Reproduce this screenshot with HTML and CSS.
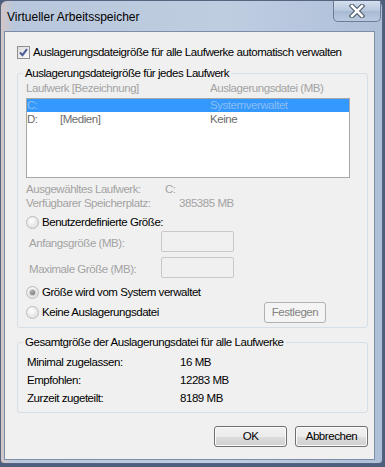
FILE: index.html
```html
<!DOCTYPE html>
<html lang="de">
<head>
  <meta charset="UTF-8" />
  <meta name="viewport" content="width=device-width, initial-scale=1.0" />
  <title>Virtueller Arbeitsspeicher</title>
  <link rel="stylesheet" href="styles.css">
</head>
<body>
  <div class="window">
    <div class="titlebar">
      <span class="title">Virtueller Arbeitsspeicher</span>
      <span class="close">
        <svg width="16" height="14" viewBox="0 0 16 14">
          <path d="M3 2 L13 12 M13 2 L3 12" stroke="#4a5668" stroke-width="4.6" stroke-linecap="square" fill="none"/>
          <path d="M3 2 L13 12 M13 2 L3 12" stroke="#ffffff" stroke-width="2.6" stroke-linecap="square" fill="none"/>
        </svg>
      </span>
    </div>

    <div class="panel">
      <div class="check-row">
        <span class="checkbox">
          <svg width="11" height="11" viewBox="0 0 11 11">
            <path d="M2 5.5 L4.5 8.2 L9 2.2" stroke="#4b5c96" stroke-width="2" fill="none"/>
          </svg>
        </span>
        Auslagerungsdateigröße für alle Laufwerke automatisch verwalten
      </div>

      <fieldset class="group group-drives">
        <legend>Auslagerungsdateigröße für jedes Laufwerk</legend>
        <div class="list-head">
          <span class="col-drive">Laufwerk [Bezeichnung]</span>
          <span>Auslagerungsdatei (MB)</span>
        </div>
        <div class="listbox">
          <div class="list-row selected">
            <span class="col-drive">C:</span>
            <span>Systemverwaltet</span>
          </div>
          <div class="list-row">
            <span class="col-drive"><span class="letter">D:</span>[Medien]</span>
            <span>Keine</span>
          </div>
        </div>
        <div class="info info-first"><span class="info-label drive">Ausgewähltes Laufwerk:</span>C:</div>
        <div class="info"><span class="info-label space">Verfügbarer Speicherplatz:</span>385385 MB</div>

        <div class="radio-row custom"><span class="radio"></span>Benutzerdefinierte Größe:</div>
        <div class="size-row initial">
          <span class="size-label">Anfangsgröße (MB):</span>
          <span class="textbox"></span>
        </div>
        <div class="size-row maximum">
          <span class="size-label">Maximale Größe (MB):</span>
          <span class="textbox"></span>
        </div>
        <div class="radio-row system"><span class="radio checked"></span>Größe wird vom System verwaltet</div>
        <div class="radio-row none">
          <span class="radio"></span>Keine Auslagerungsdatei
          <span class="btn btn-set">Festlegen</span>
        </div>
      </fieldset>

      <fieldset class="group group-total">
        <legend>Gesamtgröße der Auslagerungsdatei für alle Laufwerke</legend>
        <div class="total-row"><span class="total-label">Minimal zugelassen:</span>16 MB</div>
        <div class="total-row"><span class="total-label">Empfohlen:</span>12283 MB</div>
        <div class="total-row"><span class="total-label">Zurzeit zugeteilt:</span>8189 MB</div>
      </fieldset>

      <div class="actions">
        <span class="btn">OK</span>
        <span class="btn">Abbrechen</span>
      </div>
    </div>
  </div>
</body>
</html>
```

FILE: styles.css
```css
* {
  box-sizing: border-box;
  margin: 0;
  padding: 0;
}
body {
  background: #4e5f7e;
  font-family: "Liberation Sans", Arial, sans-serif;
  font-size: 12px;
  line-height: 15px;
  color: #000;
  width: 385px;
  height: 467px;
  overflow: hidden;
}
.window {
  width: 383px;
  height: 464px;
  border: 1px solid #55647f;
  border-radius: 7px 7px 4px 4px;
  background: linear-gradient(90deg, #d3c6c6 0, #b9c7dc 12px, #bfcde1 60%, #aebfd8 100%);
  display: flex;
  flex-direction: column;
}
.titlebar {
  height: 30px;
  display: flex;
  justify-content: space-between;
  align-items: flex-start;
}
.title {
  margin: 9px 0 0 6px;
  color: #000;
}
.close {
  width: 48px;
  height: 21px;
  margin-right: 1px;
  border: 1px solid #6d7c96;
  border-top: none;
  border-radius: 0 0 5px 5px;
  background: linear-gradient(#d4dfee, #b6c6dc 50%, #a8bad3 51%, #b9c9df);
  display: flex;
  justify-content: center;
  align-items: center;
}
.panel {
  margin: 0 7px 0 3px;
  height: 429px;
  border: 1px solid #7d8da8;
  background: #f0f0f0;
  padding: 13px 6px 0 12px;
  display: flex;
  flex-direction: column;
  font-size: 11.5px;
  letter-spacing: -0.45px;
  white-space: nowrap;
}
.check-row {
  display: flex;
  align-items: center;
  height: 15px;
}
.checkbox {
  width: 13px;
  height: 13px;
  margin-right: 3px;
  border: 1px solid #8e8f8f;
  background: linear-gradient(135deg, #dcdcdc, #fbfbfb);
  display: flex;
  justify-content: center;
  align-items: center;
}
.group {
  width: 351px;
  border: 1px solid #d5dfe5;
  border-radius: 3px;
  padding: 0 8px 4px 8px;
}
.group legend {
  margin-left: -3px;
  padding: 0 2px;
}
.group-drives {
  margin-top: 6px;
}
.group-total {
  margin-top: 7px;
  padding: 3px 8px 5px 9px;
}
.group-total legend {
  margin-left: -4px;
}
.list-head {
  display: flex;
  color: #a3a3a3;
}
.col-drive {
  width: 184px;
  flex-shrink: 0;
}
.listbox {
  margin-top: 2px;
  width: 324px;
  height: 80px;
  border: 1px solid #a7a7a7;
  background: #fff;
  color: #6d6d6d;
}
.list-row {
  display: flex;
  height: 14px;
  line-height: 13px;
}
.list-row .col-drive {
  width: 183px;
}
.list-row.selected {
  background: #3399ff;
  color: #8cbcf0;
  height: 13px;
  margin-bottom: 1px;
}
.letter {
  display: inline-block;
  width: 33px;
}
.info {
  color: #a3a3a3;
  line-height: 14px;
}
.info-first {
  margin-top: 4px;
}
.info-label {
  display: inline-block;
}
.info-label.drive {
  width: 139px;
}
.info-label.space {
  width: 153px;
}
.radio-row {
  display: flex;
  align-items: center;
}
.radio-row.custom {
  margin-top: 5px;
}
.radio-row.system {
  margin-top: 7px;
}
.radio-row.none {
  margin-top: 2px;
  height: 21px;
}
.radio {
  width: 13px;
  height: 13px;
  margin-right: 3px;
  border: 1px solid #bcbcbc;
  border-radius: 50%;
  background: radial-gradient(circle at 40% 35%, #ffffff, #e2e2e2 70%);
  display: flex;
  justify-content: center;
  align-items: center;
}
.radio.checked::after {
  content: "";
  width: 5px;
  height: 5px;
  border-radius: 50%;
  background: radial-gradient(circle at 40% 35%, #b0b0b0, #6a6a6a);
  box-shadow: 0 0 0 1px #cfcfcf;
}
.size-row {
  display: flex;
  align-items: center;
  color: #a3a3a3;
  padding-left: 3px;
}
.size-row.initial {
  margin-top: 1px;
}
.size-row.maximum {
  margin-top: 5px;
}
.size-label {
  width: 132px;
  padding-top: 4px;
}
.textbox {
  width: 73px;
  height: 21px;
  border: 1px solid #c8c8c8;
  border-radius: 2px;
  background: #f0f0f0;
}
.btn {
  width: 73px;
  height: 21px;
  border: 1px solid #707070;
  border-radius: 3px;
  background: linear-gradient(#f2f2f2, #ebebeb 50%, #dddddd 51%, #cfcfcf);
  box-shadow: inset 0 0 0 1px #fbfbfb;
  display: flex;
  justify-content: center;
  align-items: center;
  color: #000;
}
.btn-set {
  width: 62px;
  margin-left: auto;
  margin-right: 33px;
  border-color: #adb2b5;
  background: #f4f4f4;
  box-shadow: none;
  color: #838383;
}
.total-row {
  line-height: 18px;
}
.total-label {
  display: inline-block;
  width: 153px;
}
.actions {
  display: flex;
  justify-content: flex-end;
  gap: 8px;
  margin-top: 13px;
}
```
